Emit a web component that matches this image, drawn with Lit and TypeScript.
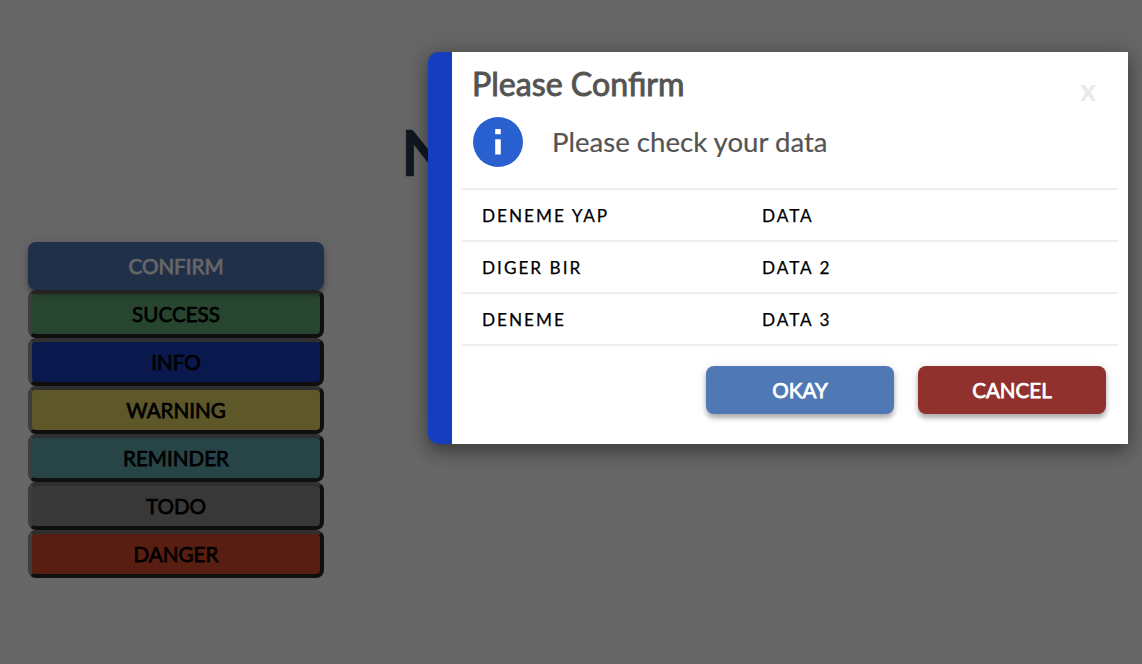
import { LitElement, html, css } from "lit";
import { customElement } from "lit/decorators.js";

const KINDS = ["success", "info", "warning", "reminder", "todo", "danger"];
const ROWS = [
  ["DENEME YAP", "DATA"],
  ["DIGER BIR", "DATA 2"],
  ["DENEME", "DATA 3"],
];

@customElement("confirm-dialog")
export class ConfirmDialog extends LitElement {
  static styles = css`
    :host {
      display: flex;
      box-sizing: border-box;
      width: 700px;
      height: 392px;
      border-left: 24px solid #173dbf;
      border-radius: 10px 0 0 10px;
      background: #fff;
      box-shadow: 0 8px 16px rgba(0, 0, 0, 0.3), 0 0 24px rgba(0, 0, 0, 0.2);
      font-family: Lato, sans-serif;
      color: #545454;
    }
    .body {
      flex: 1;
      display: flex;
      flex-direction: column;
      padding: 0 10px;
    }
    .header {
      display: flex;
      justify-content: space-between;
      height: 64px;
      padding: 0 22px 0 10px;
    }
    .title {
      font-size: 32.15px;
      line-height: 64px;
      -webkit-text-stroke: 0.9px currentColor;
    }
    .close {
      padding-top: 8px;
      font-size: 30px;
      line-height: 59px;
      font-weight: 700;
      color: #e9e9e9;
    }
    .message {
      display: flex;
      align-items: center;
      gap: 29px;
      height: 52px;
      padding: 0 11px;
      margin-bottom: 20px;
      font-size: 27.6px;
      line-height: 32px;
      -webkit-text-stroke: 0.2px currentColor;
    }
    .icon {
      width: 50px;
      height: 50px;
      -webkit-text-stroke: 0;
    }
    .rows {
      border-top: 2px solid #eee;
    }
    .row {
      display: grid;
      grid-template-columns: 280px 1fr;
      padding-left: 20px;
      height: 50px;
      line-height: 51px;
      border-bottom: 2px solid #eee;
      font-size: 17.2px;
      letter-spacing: 2px;
      -webkit-text-stroke: 0.25px currentColor;
      color: #000;
    }
    .actions {
      display: flex;
      justify-content: flex-end;
      gap: 24px;
      padding: 20px 12px 0 0;
    }
    .action {
      width: 188px;
      height: 48px;
      padding: 0;
      border: 0;
      border-radius: 8px;
      font: 20.6px Lato, sans-serif;
      -webkit-text-stroke: 0.75px currentColor;
      color: #fff;
      box-shadow: 0 4px 5px rgba(0, 0, 0, 0.3), 0 0 12px rgba(0, 0, 0, 0.08);
    }
    .okay {
      background: #4f78b5;
    }
    .cancel {
      background: #90312d;
    }
  `;

  render() {
    return html`
      <div class="body">
        <div class="header">
          <div class="title">Please Confirm</div>
          <div class="close">x</div>
        </div>
        <div class="message">
          <svg class="icon" viewBox="0 0 50 50">
            <circle cx="25" cy="25" r="25" fill="#2860cf" />
            <path d="M22.2 12h5.6v5.3h-5.6zM22.2 22.3h5.6v15.2h-5.6z" fill="#fff" />
          </svg>
          <span>Please check your data</span>
        </div>
        <div class="rows">
          ${ROWS.map(([k, v]) => html`<div class="row"><span>${k}</span><span>${v}</span></div>`)}
        </div>
        <div class="actions">
          <button class="action okay">OKAY</button>
          <button class="action cancel">CANCEL</button>
        </div>
      </div>
    `;
  }
}

@customElement("app-root")
export class AppRoot extends LitElement {
  static styles = css`
    :host {
      display: block;
      position: relative;
      height: 664px;
      overflow: hidden;
      background: #fff;
      font-family: Lato, sans-serif;
    }
    .page {
      display: flex;
      flex-direction: column;
    }
    .heading {
      box-sizing: border-box;
      height: 242px;
      margin: 0;
      padding: 113px 0 0 401px;
      font-size: 64px;
      line-height: 77px;
      font-weight: 700;
      -webkit-text-stroke: 0.6px currentColor;
      color: #2c3e50;
    }
    .buttons {
      display: flex;
      flex-direction: column;
      width: 296px;
      margin-left: 28px;
    }
    .btn {
      box-sizing: border-box;
      height: 48px;
      padding: 0;
      border: 4px solid;
      border-color: #767676 #262626 #262626 #989898;
      border-radius: 8px;
      font: 20.6px Lato, sans-serif;
      -webkit-text-stroke: 0.75px currentColor;
      color: #000;
      text-transform: uppercase;
    }
    .confirm {
      position: relative;
      border: 0;
      background: #4f78b5;
      color: #fff;
      box-shadow: 0 4px 5px rgba(0, 0, 0, 0.3), 0 0 12px rgba(0, 0, 0, 0.12);
    }
    .success { background: #62ad76; }
    .info { background: #1740c1; }
    .warning { background: #e8da69; }
    .reminder { background: #62acb2; }
    .todo { background: #8c8c8c; }
    .danger { background: #df4b2d; }
    .overlay {
      position: absolute;
      inset: 0;
      display: flex;
      justify-content: flex-end;
      align-items: flex-start;
      padding: 52px 14px 0 0;
      background: rgba(0, 0, 0, 0.6);
    }
  `;

  render() {
    return html`
      <div class="page">
        <h1 class="heading">N</h1>
        <div class="buttons">
          <button class="btn confirm">Confirm</button>
          ${KINDS.map((k) => html`<button class="btn ${k}">${k}</button>`)}
        </div>
      </div>
      <div class="overlay"><confirm-dialog></confirm-dialog></div>
    `;
  }
}
